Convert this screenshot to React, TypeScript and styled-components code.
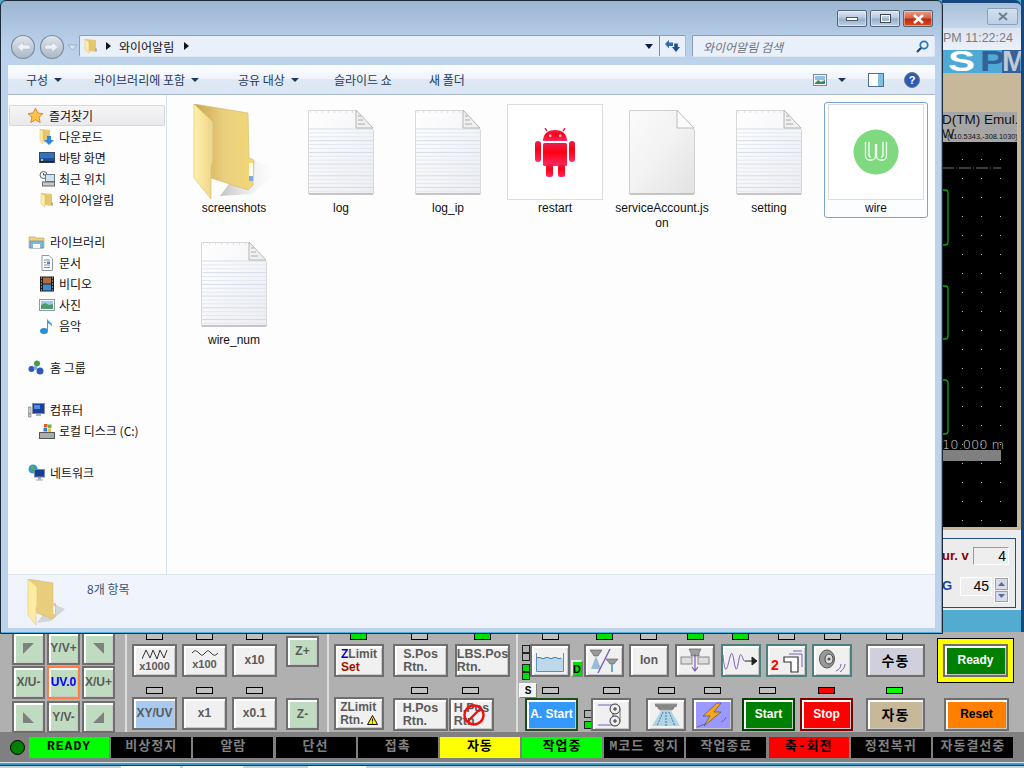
import React from "react";
import styled, { createGlobalStyle } from "styled-components";

const KR = `"Noto Sans CJK KR", "Liberation Sans", sans-serif`;
const UI = `"Liberation Sans", "Noto Sans CJK KR", sans-serif`;

const Global = createGlobalStyle`
  html, body { margin: 0; padding: 0; background: #16477f; }
  * { box-sizing: border-box; }
`;

const Desktop = styled.div`
  position: relative;
  width: 1024px;
  height: 768px;
  overflow: hidden;
  background: #52acd0;
  font-family: ${UI};
`;

/* ---------- back application window ---------- */
const BackWindow = styled.div`
  position: absolute;
  inset: 0;
  display: flex;
  flex-direction: column;
`;
const Upper = styled.div`
  height: 632px;
  flex: none;
  display: flex;
  justify-content: flex-end;
`;
const Strip = styled.div`
  width: 82px;
  height: 100%;
  background: #52acd0;
  border-right: 3px solid #16477f;
  display: flex;
  flex-direction: column;
  overflow: hidden;
`;
const StripTitle = styled.div`
  height: 28px;
  flex: none;
  border-top: 3px solid #16477f;
  background: linear-gradient(#a9c0da, #c3d6ea);
  border-top-right-radius: 6px;
  display: flex;
  justify-content: flex-end;
  padding: 5px 3px 0 0;
`;
const GhostClose = styled.div`
  width: 31px;
  height: 17px;
  border: 1px solid #8ca0b8;
  border-radius: 2px;
  background: linear-gradient(#d3e0ef, #bccfe4);
  display: flex;
  align-items: center;
  justify-content: center;
`;
const Clock = styled.div`
  height: 22px;
  flex: none;
  background: linear-gradient(#dce4f1, #ecf0f8);
  color: #7d7d7d;
  font-size: 12.5px;
  line-height: 20px;
  padding-left: 1px;
  white-space: nowrap;
`;
const LogoSvg = styled.svg`
  display: block;
  flex: none;
`;
const TanArea = styled.div`
  flex: none;
  height: 457px;
  background: #c8b89a;
  padding: 39px 4px 3px 0;
  display: flex;
  flex-direction: column;
`;
const GrayCaption = styled.div`
  height: 30px;
  flex: none;
  background: #a6a6a6;
  color: #111;
  overflow: hidden;
  white-space: nowrap;
`;
const CaptionLine = styled.div`
  font-size: 13.5px;
  line-height: 16px;
  text-indent: -9px;
`;
const CaptionSub = styled.div`
  display: flex;
  align-items: flex-end;
  font-size: 13px;
  line-height: 12px;
`;
const Coord = styled.span`
  font-size: 7.4px;
  line-height: 9px;
  margin-left: -7px;
  margin-bottom: -1px;
`;
const CanvasBox = styled.div`
  flex: 1;
  background: #000;
  position: relative;
`;
const ScaleLabel = styled.div`
  position: absolute;
  left: 0;
  top: 295px;
  color: #cfcfcf;
  line-height: 15px;
  white-space: nowrap;
  font-family: "DejaVu Sans", sans-serif;
  font-weight: 200;
  font-size: 13px;
`;
const FormPanel = styled.div`
  height: 80px;
  flex: none;
  background: #ececec;
  padding: 8px 5px 2px 0;
`;
const FormBox = styled.div`
  height: 70px;
  border: 1px solid #1f4f80;
  border-left: none;
  display: flex;
  flex-direction: column;
`;
const FormRow = styled.div<{ $mt: number }>`
  display: flex;
  align-items: flex-start;
  margin-top: ${(p) => p.$mt}px;
`;
const FormLabel = styled.span<{ $color: string; $w: number }>`
  width: ${(p) => p.$w}px;
  flex: none;
  color: ${(p) => p.$color};
  font-weight: 700;
  font-size: 13px;
  line-height: 18px;
  overflow: hidden;
  white-space: nowrap;
`;
const NumField = styled.div<{ $w: number; $h: number; $sunken?: boolean }>`
  width: ${(p) => p.$w}px;
  height: ${(p) => p.$h}px;
  flex: none;
  background: #eeeeee;
  border: 1px solid #fff;
  ${(p) => (p.$sunken ? "border-top-color:#9a9a9a;border-left-color:#9a9a9a;" : "")}
  color: #000;
  font-size: 14px;
  line-height: 17px;
  text-align: right;
  padding-right: 2px;
`;
const Spinner = styled.div`
  width: 15px;
  height: 26px;
  margin-left: 2px;
  flex: none;
  display: flex;
  flex-direction: column;
  gap: 1px;
  border: 1px solid #fff;
`;
const SpinPart = styled.div`
  flex: 1;
  background: #d9dbe6;
  border: 1px solid #a0a0a0;
  display: flex;
  align-items: center;
  justify-content: center;
`;

/* ---------- machine panel ---------- */
const Panel = styled.div`
  flex: none;
  height: 100px;
  background: #b0b0b0;
  display: flex;
`;
const Section = styled.div<{ $w: number; $first?: boolean }>`
  width: ${(p) => p.$w}px;
  flex: none;
  height: 100%;
  ${(p) => (p.$first ? "" : "border-left: 2px solid #dcdcdc;")}
`;
const PadGrid = styled.div`
  display: grid;
  grid-template-columns: 34px 34px 34px;
  grid-template-rows: 32px 33px 32px;
  column-gap: 1px;
  row-gap: 2px;
  padding-left: 12px;
`;
const PanelButton = styled.button<{
  $w: number;
  $h?: number;
  $bg?: string;
  $fg?: string;
  $ml?: number;
  $mt?: number;
  $size?: number;
  $edge?: string;
}>`
  position: relative;
  flex: none;
  width: ${(p) => p.$w}px;
  height: ${(p) => p.$h ?? 33}px;
  margin: ${(p) => p.$mt ?? 0}px 0 0 ${(p) => p.$ml ?? 0}px;
  padding: 0;
  display: flex;
  flex-direction: column;
  align-items: center;
  justify-content: center;
  background: ${(p) => p.$bg ?? "#f0f0f0"};
  color: ${(p) => p.$fg ?? "#5a5a5a"};
  border: 2px solid ${(p) => p.$edge ?? "#6e6e6e"};
  box-shadow: inset 2px 2px 0 #fff, inset -1px -1px 0 #c8c8c8;
  font-family: ${UI};
  font-weight: 700;
  font-size: ${(p) => p.$size ?? 12}px;
  line-height: 13px;
  overflow: visible;
`;
const PadButton = styled(PanelButton).attrs({ $w: 33, $bg: "#c0dcc0" })``;
const TwoLine = styled.span`
  display: flex;
  flex-direction: column;
  align-items: flex-start;
  white-space: nowrap;
`;
const Stack = styled.div`
  display: flex;
  flex-direction: column;
`;
const Row = styled.div<{ $h?: number; $mt?: number; $align?: string }>`
  display: flex;
  align-items: ${(p) => p.$align ?? "flex-start"};
  height: ${(p) => p.$h ?? 33}px;
  margin-top: ${(p) => p.$mt ?? 0}px;
`;
const Led = styled.div<{ $color?: string; $ml?: number; $mt?: number }>`
  flex: none;
  width: 17px;
  height: 7px;
  margin: ${(p) => p.$mt ?? 0}px 0 0 ${(p) => p.$ml ?? 0}px;
  background: ${(p) => p.$color ?? "#c0c0c0"};
  border: 1px solid #000;
`;
const TinyLed = styled.div<{ $color?: string; $gap?: number }>`
  width: 8px;
  height: 8px;
  margin-top: ${(p) => p.$gap ?? 0}px;
  background: ${(p) => p.$color ?? "#b0b0b0"};
  border: 1px solid #222;
`;
const TinyColumn = styled.div<{ $ml: number; $mt: number }>`
  flex: none;
  margin: ${(p) => p.$mt}px 0 0 ${(p) => p.$ml}px;
`;
const XGrid = styled.div`
  display: grid;
  grid-template-columns: repeat(3, 45px);
  column-gap: 5px;
  justify-items: center;
  margin-left: 5px;
`;
const XLedCell = styled.div<{ $mt: number; $mb: number }>`
  margin: ${(p) => p.$mt}px 0 ${(p) => p.$mb}px;
`;
const ZColumn = styled.div`
  margin-left: 9px;
  padding-top: 4px;
  display: flex;
  flex-direction: column;
  gap: 31px;
`;
const SectionRow = styled.div`
  display: flex;
`;
const ColorWord = styled.span<{ $c: string }>`
  color: ${(p) => p.$c};
`;
const DBox = styled.div`
  flex: none;
  width: 12px;
  height: 17px;
  margin: 16px 0 0 1px;
  border: 2px solid #808080;
  border-top-color: #e8e8e8;
  border-left-color: #e8e8e8;
  background: #00e000;
  color: #000;
  font-size: 11px;
  font-weight: 700;
  line-height: 14px;
  text-align: center;
`;
const SBox = styled.div`
  flex: none;
  width: 18px;
  height: 15px;
  margin-left: 1px;
  background: #f4f4f4;
  border: 1px solid #808080;
  border-top-color: #fff;
  border-left-color: #fff;
  font-size: 10px;
  font-weight: 700;
  line-height: 13px;
  text-align: center;
  color: #000;
`;
const ReadyFrame = styled.div`
  flex: none;
  width: 77px;
  height: 45px;
  margin: -6px 0 0 12px;
  background: #ffff00;
  border: 1px solid #000;
  padding: 5px 5px;
  position: relative;
`;
const KoreanLabel = styled.span`
  font-family: ${KR};
  font-size: 14px;
  font-weight: 700;
  letter-spacing: 1px;
`;
const NoSign = styled.svg`
  position: absolute;
  left: 11px;
  top: 3px;
`;
const StatusBar = styled.div`
  flex: none;
  height: 30px;
  background: #808080;
  display: flex;
  align-items: center;
  padding: 0 11px 0 10px;
`;
const Lamp = styled.div`
  width: 15px;
  height: 15px;
  flex: none;
  border-radius: 50%;
  background: #008000;
  border: 1px solid #000;
`;
const StatusCells = styled.div`
  flex: 1;
  margin-left: 4px;
  display: flex;
  justify-content: space-between;
`;
const StatusCell = styled.div<{ $bg: string; $fg: string }>`
  width: 80px;
  height: 21px;
  background: ${(p) => p.$bg};
  color: ${(p) => p.$fg};
  font-family: "Liberation Mono", ${KR};
  font-weight: 700;
  font-size: 13px;
  letter-spacing: 1px;
  line-height: 20px;
  text-align: center;
  white-space: nowrap;
`;
const Footer = styled.div`
  flex: 1;
  background: linear-gradient(#d5e6f0 0, #d5e6f0 1px, #3c9ac6 1px, #3c9ac6 3px, #10406a 3px, #10406a 4px, #c6d2da 4px);
  display: flex;
  align-items: flex-end;
  padding-left: 121px;
`;
const FooterTab = styled.div<{ $ml: number; $w: number }>`
  width: ${(p) => p.$w}px;
  height: 2px;
  margin-left: ${(p) => p.$ml}px;
  background: #fff;
`;

/* ---------- explorer window ---------- */
const Explorer = styled.div`
  position: absolute;
  left: 0;
  top: 0;
  width: 943px;
  height: 634px;
  display: flex;
  flex-direction: column;
  border: 1px solid #1d2a38;
  border-top-right-radius: 6px;
  border-top-left-radius: 6px;
  box-shadow: inset -1px -1px 0 #4fb2dc;
  background: linear-gradient(#9cb5d1, #b8d0ea 42px, #bdd3ec 64px);
  padding: 0 7px 5px 7px;
`;
const Caption = styled.div`
  height: 34px;
  flex: none;
  display: flex;
  justify-content: flex-end;
  gap: 3px;
  padding: 9px 2px 0 0;
`;
const CaptionBtn = styled.div<{ $w: number; $close?: boolean }>`
  width: ${(p) => p.$w}px;
  height: 17px;
  border: 1px solid #54657a;
  border-radius: 2px;
  background: ${(p) =>
    p.$close
      ? "linear-gradient(#eb9d86, #d9634a 45%, #b92d12 55%, #dc4c1c)"
      : "linear-gradient(#dbe6f3, #b4c8de 48%, #94acc8 52%, #c0d4e8)"};
  display: flex;
  align-items: center;
  justify-content: center;
  box-shadow: inset 0 0 0 1px rgba(255, 255, 255, 0.4);
`;
const NavRow = styled.div`
  height: 30px;
  flex: none;
  display: flex;
  align-items: flex-start;
`;
const BackForward = styled.svg`
  flex: none;
  margin: -1px 0 0 2px;
`;
const AddressBar = styled.div`
  width: 607px;
  height: 22px;
  flex: none;
  display: flex;
  align-items: center;
  background: #eaf0f9;
  border: 1px solid #8e9db0;
  border-bottom-color: #dfe7f2;
  border-right-color: #aebccd;
  border-radius: 2px;
  font-family: ${KR};
  font-size: 12px;
  color: #111;
  padding-left: 3px;
`;
const AddressSpacer = styled.div`
  flex: 1;
`;
const AddrText = styled.span`
  margin: 0 9px 0 8px;
`;
const RefreshCell = styled.div`
  width: 26px;
  height: 100%;
  border-left: 1px solid #7f8c9e;
  display: flex;
  align-items: center;
  justify-content: center;
  margin-left: 6px;
`;
const SearchBox = styled.div`
  width: 243px;
  height: 22px;
  margin-left: 6px;
  flex: none;
  display: flex;
  align-items: center;
  justify-content: space-between;
  background: #eaf0f9;
  border: 1px solid #8e9db0;
  border-bottom-color: #dfe7f2;
  border-right-color: #dfe7f2;
  border-radius: 2px;
  font-family: ${KR};
  font-size: 12px;
  font-style: italic;
  color: #70757d;
  padding: 0 5px 0 10px;
`;
const CommandBar = styled.div`
  height: 30px;
  flex: none;
  display: flex;
  align-items: center;
  background: linear-gradient(#fbfdff, #eff4fb 48%, #dfe8f5 50%, #dbe6f4);
  border-bottom: 1px solid #a7b6ca;
  font-family: ${KR};
  font-size: 12px;
  color: #1e395b;
  padding-left: 18px;
`;
const CmdItem = styled.div<{ $w: number }>`
  width: ${(p) => p.$w}px;
  flex: none;
  display: flex;
  align-items: center;
  gap: 6px;
  white-space: nowrap;
`;
const Caret = styled.span`
  width: 0;
  height: 0;
  border-left: 4px solid transparent;
  border-right: 4px solid transparent;
  border-top: 4px solid #1e395b;
`;
const CmdTools = styled.div`
  margin-left: auto;
  display: flex;
  align-items: center;
  padding-right: 15px;
`;
const MainArea = styled.div`
  flex: 1;
  min-height: 0;
  display: flex;
  background: #fdfdfe;
`;
const NavPane = styled.div`
  width: 159px;
  flex: none;
  border-right: 1px solid #d7e3f1;
  padding-top: 10px;
  font-family: ${KR};
  font-size: 12px;
  color: #111;
`;
const NavEntry = styled.div<{ $child?: boolean; $selected?: boolean; $gap?: number }>`
  height: 21px;
  margin-top: ${(p) => p.$gap ?? 0}px;
  display: flex;
  align-items: center;
  gap: ${(p) => (p.$child ? 4 : 5)}px;
  white-space: nowrap;
  padding-left: ${(p) => (p.$child ? 30 : 19)}px;
  margin-left: 1px;
  margin-right: 1px;
  border-radius: 2px;
  ${(p) =>
    p.$selected
      ? "background: linear-gradient(#f6f6f7, #e9e9ec); box-shadow: inset 0 0 0 1px #d8d8dc; padding-left: 18px;"
      : ""}
`;
const FileGrid = styled.div`
  flex: 1;
  display: grid;
  grid-template-columns: repeat(7, 104px);
  grid-auto-rows: 132px;
  column-gap: 3px;
  align-content: start;
  padding: 7px 0 0 15px;
`;
const FileTile = styled.div<{ $selected?: boolean }>`
  height: 116px;
  display: flex;
  flex-direction: column;
  align-items: center;
  padding-top: 1px;
  border: 1px solid ${(p) => (p.$selected ? "#7da2ce" : "transparent")};
  border-radius: 3px;
  background: ${(p) => (p.$selected ? "#fcfdff" : "transparent")};
`;
const Thumb = styled.div<{ $framed?: boolean }>`
  width: 96px;
  height: 96px;
  flex: none;
  display: flex;
  align-items: center;
  justify-content: center;
  ${(p) => (p.$framed ? "border: 1px solid #dddddd; background:#fff;" : "")}
`;
const FileName = styled.div`
  width: 98px;
  margin-top: 1px;
  font-size: 12px;
  line-height: 15px;
  color: #111;
  text-align: center;
  word-break: break-all;
`;
const Details = styled.div`
  height: 54px;
  flex: none;
  display: flex;
  background: linear-gradient(#f0f4fc, #eef2fb);
  border-top: 1px solid #d9e4f1;
  padding: 4px 0 0 19px;
`;
const CountText = styled.div`
  margin-left: 20px;
  margin-top: 2px;
  font-family: ${KR};
  font-size: 12px;
  line-height: 16px;
  color: #3a5272;
`;

/* ---------- icons ---------- */
const FolderLarge = () => (
  <svg width="96" height="96" viewBox="-4 0 96 96">
    <defs>
      <linearGradient id="fb" x1="0" x2="1" y1="0" y2="0">
        <stop offset="0" stopColor="#c9a64f" />
        <stop offset="0.5" stopColor="#e9cf7e" />
        <stop offset="1" stopColor="#f3d877" />
      </linearGradient>
      <linearGradient id="ff" x1="0" x2="1" y1="0" y2="0">
        <stop offset="0" stopColor="#fff0ac" />
        <stop offset="1" stopColor="#edd487" />
      </linearGradient>
      <linearGradient id="fs" x1="0" x2="1" y1="0" y2="0">
        <stop offset="0" stopColor="#8f8f8f" />
        <stop offset="1" stopColor="#ffffff" stopOpacity="0" />
      </linearGradient>
    </defs>
    <polygon points="58,54 90,66 62,90 30,92" fill="url(#fs)" opacity="0.55" />
    <polygon points="4,0 58,9 59,54 64,56 63,81 58,86 21,74" fill="url(#fb)" stroke="#d3b464" strokeWidth="0.6" />
    <rect x="59" y="59" width="4" height="17" fill="#fffdf0" />
    <rect x="59" y="72" width="4" height="5" fill="#7fa9e0" />
    <polygon points="4,0 23,18 23,56 21,63 21,95 4,74" fill="url(#ff)" stroke="#dcbe6c" strokeWidth="0.6" />
  </svg>
);

const FolderMini = ({ size = 16 }: { size?: number }) => (
  <svg width={size} height={size} viewBox="0 0 16 16" style={{ flex: "none" }}>
    <polygon points="2,1 13,2 13,11 14,11 14,14 5,13" fill="#e6c76f" />
    <polygon points="2,1 6,4 6,15 2,12" fill="#fdeea6" stroke="#cfb161" strokeWidth="0.4" />
    <rect x="12.4" y="10" width="1" height="3" fill="#6ea6e6" />
  </svg>
);

const FileLines = Array.from({ length: 17 }, (_, i) => 19 + i * 3.9);
const TextFile = () => (
  <svg width="66" height="85" viewBox="0 0 66 85">
    <defs>
      <linearGradient id="pg" x1="0" y1="0" x2="1" y2="1">
        <stop offset="0" stopColor="#ffffff" />
        <stop offset="1" stopColor="#ecedf3" />
      </linearGradient>
    </defs>
    <polygon points="0.5,0.5 47,0.5 65.5,20 65.5,84 0.5,84" fill="url(#pg)" stroke="#d8d8d8" />
    <path d="M2 2H46" stroke="#c4c4c4" strokeWidth="1" strokeDasharray="1 5" />
    {FileLines.map((y, i) => (
      <line key={y} x1="1" x2="65" y1={y} y2={y} stroke={i % 3 === 0 ? "#d3dcea" : "#e2e7f0"} />
    ))}
    <polygon points="48,0 48,18 65,18" fill="#f0f0f0" stroke="#b5b5b5" />
    <path d="M50 6h3M50 10h5M50 14h7" stroke="#999" strokeWidth="0.8" />
    <line x1="1" x2="65" y1="84" y2="84" stroke="#a3a3a3" />
  </svg>
);
const BlankFile = () => (
  <svg width="66" height="85" viewBox="0 0 66 85">
    <defs>
      <linearGradient id="bg1" x1="0" y1="0" x2="1" y2="1">
        <stop offset="0" stopColor="#fbfbfb" />
        <stop offset="0.5" stopColor="#f2f2f2" />
        <stop offset="1" stopColor="#e2e2e2" />
      </linearGradient>
    </defs>
    <polygon points="0.5,0.5 47,0.5 65.5,20 65.5,84 0.5,84" fill="url(#bg1)" stroke="#d0d0d0" />
    <polygon points="48,0 48,18 65,18" fill="#fbfbfb" stroke="#bdbdbd" />
    <line x1="1" x2="65" y1="84" y2="84" stroke="#a8a8a8" />
  </svg>
);
const AndroidIcon = () => (
  <svg width="40" height="49" viewBox="0 0 40 49">
    <defs>
      <linearGradient id="ad" x1="0" x2="0" y1="0" y2="1">
        <stop offset="0" stopColor="#e8204f" />
        <stop offset="0.4" stopColor="#ff0010" />
        <stop offset="1" stopColor="#ff2a68" />
      </linearGradient>
    </defs>
    <g fill="url(#ad)">
      <path d="M8 13 C8 5 14 2 20 2 C26 2 32 5 32 13 Z" />
      <path d="M12 3 L10 0 M28 3 L30 0" stroke="#e8204f" strokeWidth="1.4" />
      <rect x="8" y="15" width="24" height="23" rx="1.5" />
      <rect x="0" y="13" width="6" height="21" rx="3" />
      <rect x="34" y="13" width="6" height="21" rx="3" />
      <rect x="11" y="36" width="7" height="13" rx="2.5" />
      <rect x="23" y="36" width="7" height="13" rx="2.5" />
    </g>
    <rect x="14" y="6.5" width="2.4" height="2.4" fill="#fff" opacity="0.75" />
    <rect x="24" y="6.5" width="2.4" height="2.4" fill="#fff" opacity="0.75" />
  </svg>
);
const WireLogo = () => (
  <svg width="46" height="46" viewBox="0 0 46 46">
    <circle cx="23" cy="23" r="22.5" fill="#7fd97f" />
    <path
      d="M12.5 13V27a4 4 0 0 0 4 4h2a4 4 0 0 0 4-4V15M23.5 15V27a4 4 0 0 0 4 4h2a4 4 0 0 0 4-4V13M16 13V26a2 2 0 0 0 2 2M30 13V26a2 2 0 0 1-2 2"
      fill="none"
      stroke="#fff"
      strokeWidth="1.3"
      opacity="0.95"
    />
  </svg>
);

const SmallIcon = styled.svg`
  flex: none;
`;
const StarIcon = () => (
  <SmallIcon width="17" height="17" viewBox="0 0 17 17">
    <polygon points="8.5,1 10.7,6 16,6.6 12,10.2 13.2,15.5 8.5,12.7 3.8,15.5 5,10.2 1,6.6 6.3,6" fill="#fcc44d" stroke="#e4832b" />
  </SmallIcon>
);
const DownloadIcon = () => (
  <SmallIcon width="16" height="16" viewBox="0 0 16 16">
    <polygon points="1,0 11,1 11,10 5,14" fill="#e6c76f" />
    <polygon points="1,0 4,2 4,15 1,12" fill="#fdeea6" stroke="#cfb161" strokeWidth="0.4" />
    <path d="M8 7h4v4h3l-5 5-5-5h3z" fill="#2e86dc" />
  </SmallIcon>
);
const DesktopIcon = () => (
  <SmallIcon width="16" height="16" viewBox="0 0 16 16">
    <rect x="0.5" y="2.5" width="15" height="10" fill="#1c4f9a" stroke="#3a4a5e" />
    <rect x="1" y="3" width="14" height="5" fill="#3c8fd6" opacity="0.6" />
    <rect x="1" y="11" width="14" height="1.5" fill="#222" />
    <rect x="2" y="9" width="2" height="2" fill="#d8c04a" />
  </SmallIcon>
);
const RecentIcon = () => (
  <SmallIcon width="16" height="16" viewBox="0 0 16 16">
    <circle cx="4.5" cy="4" r="3.5" fill="#f4f4f4" stroke="#666" />
    <path d="M4.5 2v2h2" stroke="#333" fill="none" strokeWidth="0.8" />
    <rect x="6.5" y="3.5" width="9" height="7" fill="#cfe0ee" stroke="#6b7c8c" />
    <rect x="3.5" y="11" width="12" height="4" fill="#c9c9c9" stroke="#6b6b6b" />
  </SmallIcon>
);
const LibraryIcon = () => (
  <SmallIcon width="17" height="16" viewBox="0 0 17 16">
    <path d="M1 3h6l1 1h8v10H1z" fill="#f0d27a" stroke="#b89a4a" strokeWidth="0.6" />
    <rect x="2" y="7" width="13" height="7" fill="#7fb8e6" stroke="#4b80ad" strokeWidth="0.6" />
    <rect x="5" y="10" width="7" height="4" fill="#fbfbfb" />
  </SmallIcon>
);
const DocIcon = () => (
  <SmallIcon width="16" height="16" viewBox="0 0 16 16">
    <polygon points="3,0.5 10,0.5 13.5,4 13.5,15.5 3,15.5" fill="#fff" stroke="#8b97a5" />
    <path d="M5 5h6M5 7.5h2M5 10h6M5 12.5h6" stroke="#7f8b99" />
    <rect x="8" y="6.5" width="3" height="2.5" fill="#3f8bd8" />
  </SmallIcon>
);
const VideoIcon = () => (
  <SmallIcon width="16" height="16" viewBox="0 0 16 16">
    <rect x="1" y="0.5" width="14" height="15" fill="#1c1c1c" />
    <rect x="4" y="1.5" width="8" height="6" fill="#b26a3c" />
    <rect x="4" y="8.5" width="8" height="6" fill="#3b8dd0" />
    <path d="M2 2h1M2 5h1M2 8h1M2 11h1M2 14h1M13 2h1M13 5h1M13 8h1M13 11h1M13 14h1" stroke="#ddd" />
  </SmallIcon>
);
const PhotoIcon = () => (
  <SmallIcon width="16" height="16" viewBox="0 0 16 16">
    <rect x="0.5" y="2.5" width="15" height="11" fill="#f5f7f9" stroke="#8e99a6" />
    <rect x="2" y="4" width="12" height="4" fill="#9bcbe8" />
    <path d="M2 8l4-2 4 2 4-1v5H2z" fill="#4f9a6a" />
  </SmallIcon>
);
const MusicIcon = () => (
  <SmallIcon width="16" height="16" viewBox="0 0 16 16">
    <ellipse cx="5" cy="13" rx="4" ry="3" fill="#2a8fd8" />
    <path d="M8 13V0.5c1 3 6 4 5 8-1-2-3-3-4-3v7.5z" fill="#3aa0e4" />
  </SmallIcon>
);
const HomeGroupIcon = () => (
  <SmallIcon width="17" height="16" viewBox="0 0 17 16">
    <circle cx="9" cy="3.5" r="3" fill="#3da14b" />
    <circle cx="3.5" cy="9" r="3" fill="#2f58b8" />
    <circle cx="12" cy="11" r="3.5" fill="#2f58b8" />
    <circle cx="7.5" cy="8" r="2" fill="#7fa4d8" />
  </SmallIcon>
);
const ComputerIcon = () => (
  <SmallIcon width="17" height="16" viewBox="0 0 17 16">
    <rect x="4.5" y="1.5" width="12" height="10" fill="#1c3fa0" stroke="#8b9099" />
    <rect x="6" y="3" width="6" height="4" fill="#4d8ee0" />
    <rect x="8" y="12" width="5" height="2" fill="#b0b4ba" />
    <rect x="0.5" y="5" width="2.5" height="10" fill="#cfd3d6" stroke="#777" strokeWidth="0.6" />
    <rect x="1" y="11" width="1.5" height="1.5" fill="#45c04a" />
  </SmallIcon>
);
const DiskIcon = () => (
  <SmallIcon width="16" height="16" viewBox="0 0 16 16">
    <rect x="0.5" y="9.5" width="15" height="6" fill="#a8adb0" stroke="#555" />
    <rect x="12" y="12" width="2" height="1.5" fill="#5ad04a" />
    <rect x="5" y="1" width="3.5" height="3.5" fill="#e4572e" />
    <rect x="9" y="1.5" width="3.5" height="3.5" fill="#6cb33f" />
    <rect x="4.5" y="5" width="3.5" height="3.5" fill="#2f7fd6" />
    <rect x="8.5" y="5.5" width="3.5" height="3.5" fill="#f6c02c" />
  </SmallIcon>
);
const NetworkIcon = () => (
  <SmallIcon width="17" height="17" viewBox="0 0 17 17">
    <circle cx="5" cy="5" r="4.5" fill="#2f9ad0" />
    <path d="M2 3l3-1 2 2-3 3z" fill="#58b04a" />
    <rect x="6.5" y="5.5" width="10" height="7.5" fill="#143c9a" stroke="#7e8a98" />
    <rect x="10" y="13" width="3" height="2.5" fill="#9aa3ab" />
    <rect x="8" y="15.5" width="7" height="1" fill="#9aa3ab" />
  </SmallIcon>
);

const Corner = ({ points }: { points: string }) => (
  <svg width="13" height="13" viewBox="0 0 13 13">
    <polygon points={points} fill="#808080" />
  </svg>
);
const Glyph = styled.svg`
  display: block;
`;
const Purple = "#7c5cb8";
const ZigWave = ({ small }: { small?: boolean }) => (
  <Glyph width="26" height={small ? 8 : 11} viewBox={small ? "0 0 26 8" : "0 0 26 11"}>
    <path
      d={small ? "M0 3C3 0 4 0 7 3S10 6 13 3 16 0 19 3 23 6 26 3" : "M0 10L4 1 8 9 11 1 15 10 18 1 22 9 25 1"}
      fill="none"
      stroke="#333"
      strokeWidth="1"
    />
  </Glyph>
);
const TankGlyph = () => (
  <Glyph width="30" height="24" viewBox="0 0 30 24">
    <path d="M2 9c3-2 5 2 8 0s5 2 8 0 5 2 8 0l2 0V22H2z" fill="#bcd8ea" />
    <path d="M1.5 4V22.5H28.5V4" fill="none" stroke="#5f8fb5" />
    <path d="M2 9c3-2 5 2 8 0s5 2 8 0 5 2 8 0" fill="none" stroke="#3478a8" />
  </Glyph>
);
const NozzleSplitGlyph = () => (
  <Glyph width="30" height="24" viewBox="0 0 30 24">
    <path d="M1 1h12L9 7H5z M17 10h12l-4 5h-4z" fill="#9a9a9a" stroke="#444" strokeWidth="0.5" />
    <path d="M7 7 L2 20h10z" fill="#6fa7c8" opacity="0.7" />
    <rect x="22" y="15" width="2" height="8" fill="#6fa7c8" />
    <line x1="21" y1="0" x2="9" y2="24" stroke={Purple} strokeWidth="1.4" />
  </Glyph>
);
const ZAxisGlyph = () => (
  <Glyph width="30" height="26" viewBox="0 0 30 26">
    <path d="M9 1h12l-2 4v3h-8V5z" fill="#a0a0a0" stroke="#444" strokeWidth="0.5" />
    <rect x="1" y="9" width="11" height="7" fill="#ddd" stroke="#888" />
    <rect x="18" y="9" width="11" height="7" fill="#ddd" stroke="#888" />
    <path d="M15 6V22M12 19l3 4 3-4" stroke={Purple} strokeWidth="1.2" fill="none" />
  </Glyph>
);
const WaveArrowGlyph = () => (
  <Glyph width="36" height="24" viewBox="0 0 36 24">
    <path d="M0 6C2 28 4 20 6 12S9 0 11 12 14 22 16 10 20 14 22 12" fill="none" stroke={Purple} strokeWidth="1" />
    <path d="M22 12H33M29 8l5 4-5 4z" stroke="#222" fill="#222" strokeWidth="1" />
  </Glyph>
);
const SecondCutGlyph = () => (
  <Glyph width="34" height="26" viewBox="0 0 34 26">
    <text x="1" y="22" fill="#ff0000" fontSize="14" fontWeight="700" fontFamily="Liberation Sans">2</text>
    <path d="M14 9h14v15h-7V14h-7z" fill="#fff" stroke="#333" strokeWidth="1.2" />
    <path d="M19 6h13v13M23 3h9" fill="none" stroke={Purple} />
  </Glyph>
);
const SpeakerGlyph = () => (
  <Glyph width="28" height="24" viewBox="0 0 28 24">
    <ellipse cx="9" cy="10" rx="7.5" ry="9" fill="#999" stroke="#555" />
    <ellipse cx="11" cy="10" rx="4" ry="5" fill="#ddd" stroke="#444" />
    <circle cx="11" cy="10" r="1.6" fill="#555" />
    <path d="M18 22c3-1 5-4 5-7M22 23c3-2 5-5 5-8" fill="none" stroke={Purple} />
  </Glyph>
);
const ReelGlyph = () => (
  <Glyph width="30" height="26" viewBox="0 0 30 26">
    <path d="M2 3H17M2 23H17M17 3V23" fill="none" stroke={Purple} strokeWidth="1.2" />
    <circle cx="19" cy="7" r="5" fill="#eee" stroke="#333" />
    <circle cx="19" cy="19" r="5" fill="#eee" stroke="#333" />
    <path d="M17 7h4M19 5v4M17 19h4M19 17v4" stroke="#333" />
    <path d="M24 7V19" stroke="#777" />
  </Glyph>
);
const SprayGlyph = () => (
  <Glyph width="30" height="24" viewBox="0 0 30 24">
    <path d="M4 1h22l-5 6H9z" fill="#a8a8a8" stroke="#444" strokeWidth="0.5" />
    <path d="M4 3h22M7 5h16" stroke="#666" />
    <path d="M10 8L1 23h28L20 8z" fill="#8fc3dc" opacity="0.65" />
    <path d="M12 9L6 23M15 9V23M18 9L24 23" stroke="#2e7faa" strokeDasharray="2 1" />
  </Glyph>
);
const BoltGlyph = () => (
  <Glyph width="32" height="26" viewBox="0 0 32 26">
    <path d="M20 1L6 14h7L7 24l17-14h-7l7-9z" fill="#f6a51e" stroke="#444" strokeWidth="0.6" />
    <path d="M0 25l8-3M24 20c2-1 4-2 5-5" stroke={Purple} fill="none" />
  </Glyph>
);
const WarnGlyph = () => (
  <svg width="11" height="10" viewBox="0 0 11 10" style={{ verticalAlign: "-1px" }}>
    <polygon points="5.5,0.5 10.5,9.5 0.5,9.5" fill="#ffee00" stroke="#111" />
    <path d="M5.5 3.5v3M5.5 7.5v1" stroke="#111" />
  </svg>
);

const statusCells: [string, string, string][] = [
  ["READY", "#00ff00", "#000"],
  ["비상정지", "#000", "#808080"],
  ["알람", "#000", "#808080"],
  ["단선", "#000", "#808080"],
  ["접촉", "#000", "#808080"],
  ["자동", "#ffff00", "#000"],
  ["작업중", "#00ff00", "#000"],
  ["M코드 정지", "#000", "#808080"],
  ["작업종료", "#000", "#808080"],
  ["축-회전", "#ff0000", "#000"],
  ["정전복귀", "#000", "#808080"],
  ["자동결선중", "#000", "#808080"],
];

const dotsX = [20, 39, 58];
const dotsY = Array.from({ length: 20 }, (_, i) => 17 + i * 19);

const files: { name: string; kind: string }[] = [
  { name: "screenshots", kind: "folder" },
  { name: "log", kind: "text" },
  { name: "log_ip", kind: "text" },
  { name: "restart", kind: "android" },
  { name: "serviceAccount.json", kind: "blank" },
  { name: "setting", kind: "text" },
  { name: "wire", kind: "wire" },
  { name: "wire_num", kind: "text" },
];

const tileArt = (kind: string) => {
  if (kind === "folder") return <FolderLarge />;
  if (kind === "text") return <TextFile />;
  if (kind === "android") return <AndroidIcon />;
  if (kind === "blank") return <BlankFile />;
  return <WireLogo />;
};

export default function App() {
  return (
    <Desktop>
      <Global />
      <BackWindow>
        <Upper>
          <Strip>
            <StripTitle>
              <GhostClose>
                <svg width="12" height="9" viewBox="0 0 12 9">
                  <path d="M2 1l8 7M10 1L2 8" stroke="#6f7f92" strokeWidth="2" fill="none" />
                </svg>
              </GhostClose>
            </StripTitle>
            <Clock>PM 11:22:24</Clock>
            <LogoSvg width="79" height="23" viewBox="0 0 79 23">
              <rect width="79" height="23" fill="#4eaad4" />
              <rect x="60" width="19" height="23" fill="#34609c" />
              <text transform="translate(6 21) scale(1.4 1)" fontSize="29" fontWeight="700" fontFamily="Liberation Sans" fill="#fff">S</text>
              <text transform="translate(38 21) scale(1.3 1)" fontSize="29" fontWeight="700" fontFamily="Liberation Sans" fill="#34609c">P</text>
              <text x="60" y="21" fontSize="29" fontWeight="700" fontFamily="Liberation Sans" fill="#c3c9d4">M</text>
            </LogoSvg>
            <TanArea>
              <GrayCaption>
                <CaptionLine>AD(TM) Emul.</CaptionLine>
                <CaptionSub>
                  W<Coord>(110.5343,-308.1030)</Coord>
                </CaptionSub>
              </GrayCaption>
              <CanvasBox>
                <svg width="73" height="385" viewBox="0 0 73 385" style={{ display: "block" }}>
                  {dotsX.map((x) =>
                    dotsY.map((y) => <rect key={`${x}-${y}`} x={x} y={y} width="1" height="1" fill="#bdbdbd" />)
                  )}
                  <path d="M0 26H59" stroke="#777" strokeWidth="1" strokeDasharray="12 2 1 2" />
                  <path d="M0 48H3q3 0 3 3V100q0 3-3 3H0M0 144H3q3 0 3 3V194q0 3-3 3H0M0 238H3q3 0 3 3V289q0 3-3 3H0" fill="none" stroke="#0ea60e" strokeWidth="1.3" />
                  <rect x="0" y="308" width="59" height="11" fill="#808080" />
                </svg>
                <ScaleLabel>10.000 m</ScaleLabel>
              </CanvasBox>
            </TanArea>
            <FormPanel>
              <FormBox>
                <FormRow $mt={8}>
                  <FormLabel $color="#8a0000" $w={31}>ur. v</FormLabel>
                  <NumField $w={36} $h={18} $sunken>4</NumField>
                </FormRow>
                <FormRow $mt={12}>
                  <FormLabel $color="#1a3ea0" $w={18}>G</FormLabel>
                  <NumField $w={32} $h={19}>45</NumField>
                  <Spinner>
                    <SpinPart>
                      <svg width="7" height="4" viewBox="0 0 7 4"><polygon points="3.5,0 7,4 0,4" fill="#5a6aa0" /></svg>
                    </SpinPart>
                    <SpinPart>
                      <svg width="7" height="4" viewBox="0 0 7 4"><polygon points="0,0 7,0 3.5,4" fill="#5a6aa0" /></svg>
                    </SpinPart>
                  </Spinner>
                </FormRow>
              </FormBox>
            </FormPanel>
          </Strip>
        </Upper>

        <Panel>
          <Section $w={125} $first>
            <PadGrid>
              <PadButton><Corner points="1,1 12,1 1,12" /></PadButton>
              <PadButton>Y/V+</PadButton>
              <PadButton><Corner points="1,1 12,1 12,12" /></PadButton>
              <PadButton>X/U-</PadButton>
              <PadButton $edge="#ff7f40" $fg="#0000ff">UV.0</PadButton>
              <PadButton>X/U+</PadButton>
              <PadButton $h={32}><Corner points="1,1 12,12 1,12" /></PadButton>
              <PadButton $h={32}>Y/V-</PadButton>
              <PadButton $h={32}><Corner points="12,1 12,12 1,12" /></PadButton>
            </PadGrid>
          </Section>

          <Section $w={202}>
            <SectionRow>
              <XGrid>
                <XLedCell $mt={1} $mb={4}><Led /></XLedCell>
                <XLedCell $mt={1} $mb={4}><Led /></XLedCell>
                <XLedCell $mt={1} $mb={4}><Led /></XLedCell>
                <PanelButton $w={45} $size={11}>
                  <ZigWave />
                  x1000
                </PanelButton>
                <PanelButton $w={45} $size={11}>
                  <ZigWave small />
                  x100
                </PanelButton>
                <PanelButton $w={45}>x10</PanelButton>
                <XLedCell $mt={10} $mb={3}><Led /></XLedCell>
                <XLedCell $mt={10} $mb={3}><Led /></XLedCell>
                <XLedCell $mt={10} $mb={3}><Led /></XLedCell>
                <PanelButton $w={45} $bg="#a6caf0">XY/UV</PanelButton>
                <PanelButton $w={45}>x1</PanelButton>
                <PanelButton $w={45}>x0.1</PanelButton>
              </XGrid>
              <ZColumn>
                <PanelButton $w={33} $h={31} $bg="#c0dcc0">Z+</PanelButton>
                <PanelButton $w={33} $h={32} $bg="#c0dcc0">Z-</PanelButton>
              </ZColumn>
            </SectionRow>
          </Section>

          <Section $w={189}>
            <Stack>
              <Row $h={7} $mt={1}>
                <Led $color="#00e000" $ml={21} />
                <Led $ml={44} />
                <Led $color="#00e000" $ml={46} />
              </Row>
              <Row $mt={4}>
                <PanelButton $w={50} $ml={5}>
                  <TwoLine>
                    <span><ColorWord $c="#0000c8">Z</ColorWord>Limit</span>
                    <ColorWord $c="#a01000">Set</ColorWord>
                  </TwoLine>
                </PanelButton>
                <PanelButton $w={55} $ml={9} $size={12.5}>
                  <TwoLine>
                    <span>S.Pos</span>
                    <span>Rtn.</span>
                  </TwoLine>
                </PanelButton>
                <PanelButton $w={55} $ml={7} $size={12.5}>
                  <TwoLine>
                    <span>LBS.Pos</span>
                    <span>Rtn.</span>
                  </TwoLine>
                </PanelButton>
              </Row>
              <Row $h={7} $mt={10}>
                <Led $ml={82} />
                <Led $ml={34} />
              </Row>
              <Row $mt={3}>
                <PanelButton $w={50} $ml={5}>
                  <TwoLine>
                    <span>ZLimit</span>
                    <span>Rtn. <WarnGlyph /></span>
                  </TwoLine>
                </PanelButton>
                <PanelButton $w={55} $ml={9} $mt={1} $size={12.5}>
                  <TwoLine>
                    <span>H.Pos</span>
                    <span>Rtn.</span>
                  </TwoLine>
                </PanelButton>
                <PanelButton $w={45} $ml={1} $mt={1} $size={12.5}>
                  <TwoLine>
                    <span>H.Pos</span>
                    <span>Rtn.</span>
                  </TwoLine>
                  <NoSign width="24" height="24" viewBox="0 0 24 24">
                    <circle cx="12" cy="12" r="9.5" fill="none" stroke="#f01010" strokeWidth="2.4" />
                    <line x1="5" y1="19" x2="19" y2="5" stroke="#f01010" strokeWidth="2.4" />
                  </NoSign>
                </PanelButton>
              </Row>
            </Stack>
          </Section>

          <Section $w={508}>
            <Stack>
              <Row $h={7} $mt={1}>
                <Led $ml={24} />
                <Led $color="#00e000" $ml={37} />
                <Led $ml={27} />
                <Led $color="#00e000" $ml={30} />
                <Led $color="#00e000" $ml={28} />
                <Led $ml={29} />
                <Led $ml={29} />
                <Led $ml={45} />
              </Row>
              <Row $mt={4} $h={32}>
                <TinyColumn $ml={4} $mt={1}>
                  <TinyLed />
                  <TinyLed />
                  <TinyLed $color="#00e000" $gap={3} />
                  <TinyLed $color="#00e000" />
                </TinyColumn>
                <PanelButton $w={40}><TankGlyph /></PanelButton>
                <DBox>D</DBox>
                <PanelButton $w={40} $ml={1}><NozzleSplitGlyph /></PanelButton>
                <PanelButton $w={40} $ml={5}>Ion</PanelButton>
                <PanelButton $w={40} $ml={6}><ZAxisGlyph /></PanelButton>
                <PanelButton $w={40} $ml={6} $edge="#4f8080"><WaveArrowGlyph /></PanelButton>
                <PanelButton $w={41} $ml={5} $edge="#4f8080"><SecondCutGlyph /></PanelButton>
                <PanelButton $w={40} $ml={5} $edge="#4f8080"><SpeakerGlyph /></PanelButton>
                <PanelButton $w={59} $ml={14} $bg="#cfd0dc" $fg="#000"><KoreanLabel>수동</KoreanLabel></PanelButton>
                <ReadyFrame>
                  <PanelButton $w={65} $h={33} $bg="#008000" $fg="#fff">Ready</PanelButton>
                </ReadyFrame>
              </Row>
              <Row $h={15} $mt={7} $align="center">
                <SBox>S</SBox>
                <Led $ml={5} />
                <Led $ml={44} />
                <Led $ml={38} />
                <Led $ml={29} />
                <Led $ml={38} />
                <Led $color="#ff0000" $ml={42} />
                <Led $color="#00ff00" $ml={51} />
              </Row>
              <Row>
                <PanelButton $w={53} $ml={7} $bg="#3399ff" $fg="#fff" $edge="#1d4d1d">A. Start</PanelButton>
                <TinyColumn $ml={6} $mt={12}>
                  <TinyLed />
                  <TinyLed $color="#00e000" $gap={3} />
                </TinyColumn>
                <PanelButton $w={40} $ml={-1}><ReelGlyph /></PanelButton>
                <PanelButton $w={40} $ml={15}><SprayGlyph /></PanelButton>
                <PanelButton $w={41} $ml={6} $bg="#9999ff"><BoltGlyph /></PanelButton>
                <PanelButton $w={53} $ml={9} $bg="#008000" $fg="#fff" $edge="#004000">Start</PanelButton>
                <PanelButton $w={53} $ml={5} $bg="#ff0000" $fg="#fff" $edge="#800000">Stop</PanelButton>
                <PanelButton $w={59} $ml={13} $bg="#c8b89a" $fg="#000"><KoreanLabel>자동</KoreanLabel></PanelButton>
                <PanelButton $w={65} $ml={19} $bg="#ff8000" $fg="#000">Reset</PanelButton>
              </Row>
            </Stack>
          </Section>
        </Panel>

        <StatusBar>
          <Lamp />
          <StatusCells>
            {statusCells.map(([label, bg, fg]) => (
              <StatusCell key={label} $bg={bg} $fg={fg}>{label}</StatusCell>
            ))}
          </StatusCells>
        </StatusBar>
        <Footer>
          <FooterTab $ml={0} $w={59} />
          <FooterTab $ml={3} $w={60} />
          <FooterTab $ml={65} $w={58} />
        </Footer>
      </BackWindow>

      <Explorer>
        <Caption>
          <CaptionBtn $w={30}>
            <svg width="12" height="4" viewBox="0 0 12 4"><rect x="0.5" y="0.5" width="11" height="3" fill="#fff" stroke="#556" /></svg>
          </CaptionBtn>
          <CaptionBtn $w={30}>
            <svg width="11" height="9" viewBox="0 0 11 9"><rect x="1" y="1" width="9" height="7" fill="none" stroke="#fff" strokeWidth="2" /><rect x="0.5" y="0.5" width="10" height="8" fill="none" stroke="#445" /></svg>
          </CaptionBtn>
          <CaptionBtn $w={30} $close>
            <svg width="13" height="10" viewBox="0 0 13 10"><path d="M2 1l9 8M11 1L2 9" stroke="#fff" strokeWidth="2.6" /></svg>
          </CaptionBtn>
        </Caption>
        <NavRow>
          <BackForward width="69" height="26" viewBox="0 0 69 26">
            <defs>
              <linearGradient id="nb" x1="0" x2="0" y1="0" y2="1">
                <stop offset="0" stopColor="#dfe6ee" />
                <stop offset="1" stopColor="#a9b7c7" />
              </linearGradient>
            </defs>
            <circle cx="13" cy="13" r="11.5" fill="url(#nb)" stroke="#7e8b99" strokeWidth="1.2" />
            <circle cx="42" cy="13" r="11.5" fill="url(#nb)" stroke="#7e8b99" strokeWidth="1.2" />
            <path d="M7 13l6-5v3h7v4h-7v3z" fill="#eef2f6" stroke="#b0bac6" strokeWidth="0.5" />
            <path d="M48 13l-6-5v3h-7v4h7v3z" fill="#eef2f6" stroke="#b0bac6" strokeWidth="0.5" />
            <path d="M58 11h9l-4.5 5z" fill="#dde6ef" stroke="#8d9cad" strokeWidth="0.7" />
          </BackForward>
          <AddressBar>
            <FolderMini />
            <svg width="5" height="8" viewBox="0 0 5 8" style={{ marginLeft: 7 }}><polygon points="0,0 5,4 0,8" fill="#111" /></svg>
            <AddrText>와이어알림</AddrText>
            <svg width="5" height="8" viewBox="0 0 5 8" style={{ marginLeft: 1 }}><polygon points="0,0 5,4 0,8" fill="#111" /></svg>
            <AddressSpacer />
            <svg width="8" height="5" viewBox="0 0 8 5"><polygon points="0,0 8,0 4,5" fill="#0c1a52" /></svg>
            <RefreshCell>
              <svg width="15" height="14" viewBox="0 0 15 14">
                <path d="M0 5l4-4v2.5h4V7H4v2.5z" fill="#2b6cb8" />
                <path d="M15 8l-4 5-4-5h2.2V4.5h3.6V8z" fill="#184f98" />
              </svg>
            </RefreshCell>
          </AddressBar>
          <SearchBox>
            와이어알림 검색
            <svg width="13" height="13" viewBox="0 0 13 13">
              <circle cx="8" cy="5" r="3.7" fill="none" stroke="#2a78c0" strokeWidth="1.8" />
              <line x1="5" y1="8" x2="1" y2="12" stroke="#1f3f70" strokeWidth="2.2" />
            </svg>
          </SearchBox>
        </NavRow>
        <CommandBar>
          <CmdItem $w={68}>구성 <Caret /></CmdItem>
          <CmdItem $w={144}>라이브러리에 포함 <Caret /></CmdItem>
          <CmdItem $w={96}>공유 대상 <Caret /></CmdItem>
          <CmdItem $w={95}>슬라이드 쇼</CmdItem>
          <CmdItem $w={60}>새 폴더</CmdItem>
          <CmdTools>
            <svg width="14" height="12" viewBox="0 0 14 12" style={{ marginRight: 11 }}>
              <rect x="0.5" y="0.5" width="13" height="11" fill="#f2f5f9" stroke="#7a8ca0" />
              <rect x="2" y="2" width="10" height="4" fill="#8fc2e6" />
              <path d="M2 9l3-3 3 2 4-2v4H2z" fill="#3e8a5c" />
            </svg>
            <Caret />
            <svg width="16" height="14" viewBox="0 0 16 14" style={{ marginLeft: 22 }}>
              <rect x="0.5" y="0.5" width="15" height="13" fill="#fff" stroke="#4f6d90" />
              <rect x="10" y="1" width="5" height="12" fill="#7cc0e4" />
            </svg>
            <svg width="16" height="16" viewBox="0 0 16 16" style={{ marginLeft: 20 }}>
              <circle cx="8" cy="8" r="7.5" fill="#2b5cb5" stroke="#6d7683" />
              <text x="8" y="12" textAnchor="middle" fill="#fff" fontSize="11" fontWeight="700" fontFamily="Liberation Sans">?</text>
            </svg>
          </CmdTools>
        </CommandBar>
        <MainArea>
          <NavPane>
            <NavEntry $selected><StarIcon />즐겨찾기</NavEntry>
            <NavEntry $child><DownloadIcon />다운로드</NavEntry>
            <NavEntry $child><DesktopIcon />바탕 화면</NavEntry>
            <NavEntry $child><RecentIcon />최근 위치</NavEntry>
            <NavEntry $child><FolderMini />와이어알림</NavEntry>
            <NavEntry $gap={21}><LibraryIcon />라이브러리</NavEntry>
            <NavEntry $child><DocIcon />문서</NavEntry>
            <NavEntry $child><VideoIcon />비디오</NavEntry>
            <NavEntry $child><PhotoIcon />사진</NavEntry>
            <NavEntry $child><MusicIcon />음악</NavEntry>
            <NavEntry $gap={21}><HomeGroupIcon />홈 그룹</NavEntry>
            <NavEntry $gap={21}><ComputerIcon />컴퓨터</NavEntry>
            <NavEntry $child><DiskIcon />로컬 디스크 (C:)</NavEntry>
            <NavEntry $gap={21}><NetworkIcon />네트워크</NavEntry>
          </NavPane>
          <FileGrid>
            {files.map((f) => (
              <FileTile key={f.name} $selected={f.kind === "wire"}>
                <Thumb $framed={f.kind === "wire" || f.kind === "android"}>{tileArt(f.kind)}</Thumb>
                <FileName>{f.name}</FileName>
              </FileTile>
            ))}
          </FileGrid>
        </MainArea>
        <Details>
          <svg width="40" height="46" viewBox="0 0 40 46">
            <polygon points="24,24 38,30 24,42 10,44" fill="#a0a0a0" opacity="0.35" />
            <polygon points="1,0 26,4 26,24 29,25 28,38 25,40 10,34" fill="#e8cd7c" stroke="#d3b464" strokeWidth="0.5" />
            <polygon points="1,0 10,8 10,26 9,30 9,46 1,36" fill="#fdeda4" stroke="#dcbe6c" strokeWidth="0.5" />
            <rect x="26.5" y="27" width="1.5" height="8" fill="#fff" />
          </svg>
          <CountText>8개 항목</CountText>
        </Details>
      </Explorer>
    </Desktop>
  );
}
